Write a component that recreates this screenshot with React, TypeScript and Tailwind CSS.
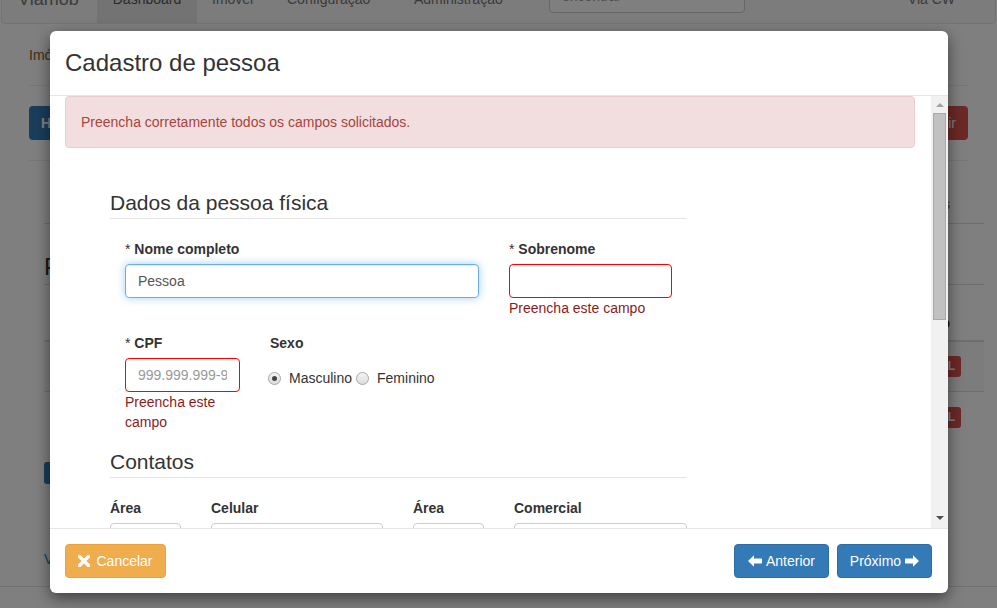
import React from "react";

function ArrowLeft() {
  return (
    <svg width="14" height="12" viewBox="0 0 14 12" className="inline-block">
      <path d="M0 6 L6 0.3 L6 3.6 L13.6 3.6 Q14 3.6 14 4 L14 8 Q14 8.4 13.6 8.4 L6 8.4 L6 11.7 Z" fill="white" />
    </svg>
  );
}
function ArrowRight() {
  return (
    <svg width="14" height="12" viewBox="0 0 14 12" className="inline-block">
      <path d="M14 6 L8 0.3 L8 3.6 L0.4 3.6 Q0 3.6 0 4 L0 8 Q0 8.4 0.4 8.4 L8 8.4 L8 11.7 Z" fill="white" />
    </svg>
  );
}
function RemoveIcon() {
  return (
    <svg width="12" height="12" viewBox="0 0 12 12" className="inline-block">
      <path d="M1.5 1.5 L10.5 10.5 M10.5 1.5 L1.5 10.5" stroke="white" strokeWidth="3.4" strokeLinecap="round" />
    </svg>
  );
}

function Radio({ checked }: { checked?: boolean }) {
  return (
    <span className="flex h-[13px] w-[13px] items-center justify-center rounded-full border border-[#a6a6a6] bg-gradient-to-b from-[#f4f4f4] to-[#dcdcdc]">
      {checked && <span className="h-[5px] w-[5px] rounded-full bg-[#444]" />}
    </span>
  );
}

function Legend({ children }: { children: React.ReactNode }) {
  return (
    <div className="mb-[20px] h-[31px] border-b border-[#e5e5e5] text-[21px] leading-[30px] text-[#333]">{children}</div>
  );
}

function Label({ children, req }: { children: React.ReactNode; req?: boolean }) {
  return (
    <div className="mb-[5px] h-[20px] text-[14px] leading-[20px] text-[#333]">
      {req && <span className="font-normal">* </span>}
      <span className="font-bold">{children}</span>
    </div>
  );
}

export default function App() {
  return (
    <div className="relative h-[608px] w-[997px] overflow-hidden bg-white font-['Liberation_Sans',Arial,Helvetica,sans-serif] text-[14px] leading-[20px] text-[#333]">
      {/* Background page */}
      <div className="mx-px -mt-[26px] flex h-[50px] items-stretch rounded-[4px] border border-[#e7e7e7] bg-[#f8f8f8] text-[#777]">
        <div className="flex w-[95px] items-center pl-[16px] text-[18px]">Viamob</div>
        <div className="flex w-[100px] items-center justify-center bg-[#e7e7e7] text-[#555]">Dashboard</div>
        <div className="flex w-[74px] items-center pl-[15px]">Imóvel</div>
        <div className="flex w-[127px] items-center pl-[16px]">Configuração</div>
        <div className="flex w-[151px] items-center pl-[16px]">Administração</div>
        <div className="mt-[4px] h-[34px] w-[196px] rounded-[4px] border border-[#ccc] bg-white px-[12px] leading-[32px] text-[#999]">
          encontrar
        </div>
        <div className="flex flex-1 items-center justify-end pr-[40px]">Via CW</div>
      </div>

      <div className="mx-[29px]">
        <div className="mt-[21px] h-[20px] text-[#7a5a2a]">Imóveis</div>
        <div className="mt-[20px] border-t border-[#eee]" />
        <div className="mt-[20px] flex justify-between">
          <div className="h-[34px] rounded-[4px] bg-[#337ab7] px-[12px] font-bold leading-[34px] text-white">Hoje</div>
          <div className="h-[34px] rounded-[4px] bg-[#d9534f] px-[12px] leading-[34px] text-white">Excluir</div>
        </div>
        <div className="mt-[20px] border-t border-[#eee]" />
      </div>

      <div className="ml-[44px] mr-[13px]">
        <div className="mt-[33px] flex h-[20px] justify-end pr-[34px] text-[#337ab7]">Mais filtros</div>
        <div className="mt-[9px] border-t border-[#ddd]" />
        <div className="mt-[30px] text-[24px] leading-[26px]">Pessoas</div>
        <div className="mt-[4px] border-t border-[#ddd]" />
        <div className="mt-[28px] flex h-[20px] justify-end pr-[34px] font-bold">Ação</div>
        <div className="mt-[7px] border-t-2 border-[#ddd]" />
        <div className="flex h-[50px] items-center justify-end border-b border-[#ddd] bg-[#f9f9f9] pr-[23px]">
          <span className="rounded-[3px] bg-[#d9534f] px-[6px] text-[12px] font-bold leading-[21px] text-white">INDISPONÍVEL</span>
        </div>
        <div className="flex h-[50px] items-center justify-end pr-[23px]">
          <span className="rounded-[3px] bg-[#d9534f] px-[6px] text-[12px] font-bold leading-[21px] text-white">INDISPONÍVEL</span>
        </div>
        <div className="mt-[20px] h-[22px] w-[60px] rounded-[3px] bg-[#337ab7]" />
        <div className="mt-[65px] text-[#337ab7]">Voltar</div>
      </div>
      <div className="mt-[17px] border-t border-[#e5e5e5]" />

      {/* Overlay */}
      <div className="absolute inset-0 bg-black/50" />

      {/* Modal */}
      <div className="absolute left-[50px] top-[31px] flex h-[562px] w-[898px] flex-col overflow-hidden rounded-[6px] bg-white shadow-[0_5px_15px_rgba(0,0,0,0.5)]">
        <div className="flex h-[65px] shrink-0 items-center border-b border-[#e5e5e5] px-[15px]">
          <div className="text-[24px] leading-[26px] text-[#333]">Cadastro de pessoa</div>
        </div>

        <div className="flex h-[432px] shrink-0">
          <div className="flex-1 overflow-hidden pl-[15px] pr-[16px]">
            <div className="flex h-[52px] items-center rounded-[4px] border border-[#ebccd1] bg-[#f2dede] px-[15px] text-[#a94442]">
              Preencha corretamente todos os campos solicitados.
            </div>

            <div className="ml-[45px] mt-[40px] w-[577px]">
              <Legend>Dados da pessoa física</Legend>

              <div className="mb-[15px] flex">
                <div className="w-[384px] px-[15px]">
                  <Label req>Nome completo</Label>
                  <div className="h-[34px] rounded-[4px] border border-[#66afe9] px-[12px] leading-[32px] text-[#555] shadow-[inset_0_1px_1px_rgba(0,0,0,0.075),0_0_8px_rgba(102,175,233,0.6)]">
                    Pessoa
                  </div>
                  <div className="h-[20px]" />
                </div>
                <div className="w-[193px] px-[15px]">
                  <Label req>Sobrenome</Label>
                  <div className="h-[34px] rounded-[4px] border border-[#ff0000]" />
                  <div className="h-[20px] text-[#8a1c1c]">Preencha este campo</div>
                </div>
              </div>

              <div className="mb-[15px] flex">
                <div className="w-[145px] px-[15px]">
                  <Label req>CPF</Label>
                  <div className="h-[34px] rounded-[4px] border border-[#ff0000] px-[12px]">
                    <div className="overflow-hidden whitespace-nowrap leading-[32px] text-[#999]">999.999.999-99</div>
                  </div>
                  <div className="text-[#8a1c1c]">Preencha este campo</div>
                </div>
                <div className="px-[15px]">
                  <Label>Sexo</Label>
                  <div className="mt-[15px] flex h-[20px] items-center">
                    <span className="-ml-[2px]">
                      <Radio checked />
                    </span>
                    <span className="ml-[8px] text-[#333]">Masculino</span>
                    <span className="ml-[4px]">
                      <Radio />
                    </span>
                    <span className="ml-[8px] text-[#333]">Feminino</span>
                  </div>
                </div>
              </div>

              <Legend>Contatos</Legend>

              <div className="flex gap-[30px]">
                <div className="w-[71px]">
                  <Label>Área</Label>
                  <div className="h-[34px] rounded-[4px] border border-[#ccc]" />
                </div>
                <div className="w-[172px]">
                  <Label>Celular</Label>
                  <div className="h-[34px] rounded-[4px] border border-[#ccc]" />
                </div>
                <div className="w-[71px]">
                  <Label>Área</Label>
                  <div className="h-[34px] rounded-[4px] border border-[#ccc]" />
                </div>
                <div className="w-[173px]">
                  <Label>Comercial</Label>
                  <div className="h-[34px] rounded-[4px] border border-[#ccc]" />
                </div>
              </div>
            </div>
          </div>

          {/* Scrollbar */}
          <div className="flex w-[17px] shrink-0 flex-col items-center bg-[#f1f1f1]">
            <div className="mt-[7px] h-0 w-0 border-x-[4px] border-b-[4px] border-x-transparent border-b-[#a3a3a3]" />
            <div className="mt-[6px] h-[207px] w-[13px] border border-[#a9a9a9] bg-[#c1c1c1]" />
            <div className="flex-1" />
            <div className="mb-[8px] h-0 w-0 border-x-[4px] border-t-[4px] border-x-transparent border-t-[#505050]" />
          </div>
        </div>

        <div className="flex h-[65px] shrink-0 items-center justify-between border-t border-[#e5e5e5] pl-[15px] pr-[16px]">
          <div className="flex h-[34px] w-[101px] items-center justify-center gap-[6px] rounded-[4px] border border-[#eea236] bg-[#f0ad4e] text-white">
            <RemoveIcon />
            <span>Cancelar</span>
          </div>
          <div className="flex gap-[8px]">
            <div className="flex h-[34px] w-[95px] items-center justify-center gap-[4px] rounded-[4px] border border-[#2e6da4] bg-[#337ab7] text-white">
              <ArrowLeft />
              <span>Anterior</span>
            </div>
            <div className="flex h-[34px] w-[95px] items-center justify-center gap-[4px] rounded-[4px] border border-[#2e6da4] bg-[#337ab7] text-white">
              <span>Próximo</span>
              <ArrowRight />
            </div>
          </div>
        </div>
      </div>
    </div>
  );
}
